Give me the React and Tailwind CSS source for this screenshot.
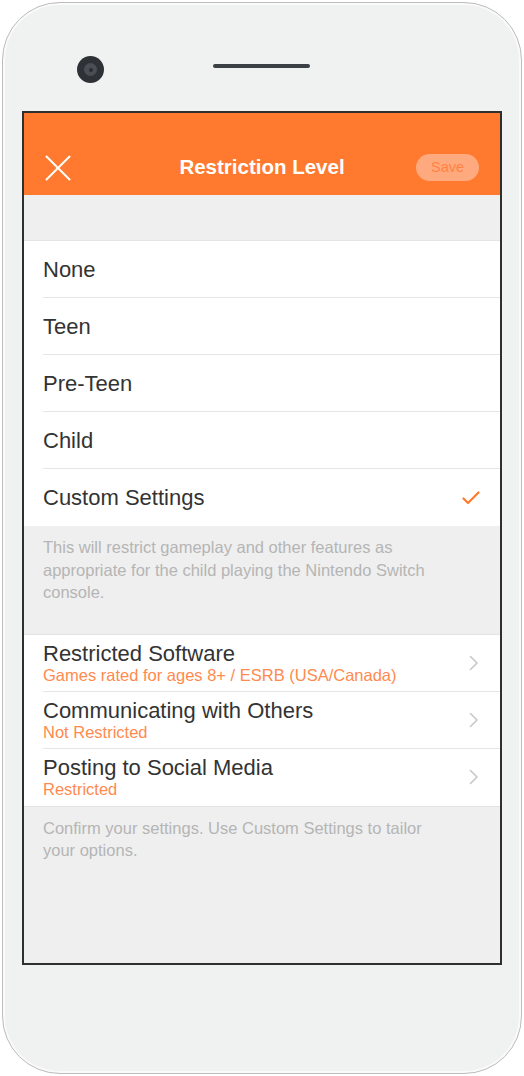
import React from 'react'

const levels = ['None', 'Teen', 'Pre-Teen', 'Child', 'Custom Settings']

const settings = [
  { title: 'Restricted Software', value: 'Games rated for ages 8+ / ESRB (USA/Canada)' },
  { title: 'Communicating with Others', value: 'Not Restricted' },
  { title: 'Posting to Social Media', value: 'Restricted' },
]

const Chevron = () => (
  <svg width="10" height="16" viewBox="0 0 10 16" fill="none" className="shrink-0">
    <polyline points="1.5,1.5 8,8 1.5,14.5" stroke="#c7c7cc" strokeWidth="1.6" strokeLinecap="round" strokeLinejoin="round" />
  </svg>
)

const App = () => {
  return (
    <div className="w-[524px] h-[1076px] p-[2px] bg-white" style={{ fontFamily: '"Liberation Sans", Arial, sans-serif' }}>
      <div className="h-full rounded-[58px] border border-[#bdbdbd] bg-[#f0f1f1] flex flex-col items-center shadow-[inset_0_0_0_2px_#fafafa]">

        {/* Camera + speaker */}
        <div className="w-full h-[108px] flex items-start">
          <div className="ml-[74px] mt-[53px] w-[27px] h-[27px] rounded-full bg-[#2e3236] flex items-center justify-center">
            <div className="w-[13px] h-[13px] rounded-full bg-[#4a4f55] flex items-center justify-center">
              <div className="w-[4px] h-[4px] rounded-full bg-[#2a2d31]" />
            </div>
          </div>
          <div className="ml-[109px] mt-[61px] w-[97px] h-[4px] rounded-full bg-[#3b4045]" />
        </div>

        {/* Screen */}
        <div className="w-[480px] h-[854px] border-2 border-[#2f2f2f] bg-[#efefef] flex flex-col overflow-hidden">

          {/* Header */}
          <div className="h-[82px] bg-[#ff7a2f] pt-[27px] shrink-0">
            <div className="h-[55px] px-[21px] flex items-center justify-between relative">
              <svg width="26" height="26" viewBox="0 0 26 26" fill="none">
                <line x1="1.5" y1="1.5" x2="24.5" y2="24.5" stroke="white" strokeWidth="2" strokeLinecap="round" />
                <line x1="24.5" y1="1.5" x2="1.5" y2="24.5" stroke="white" strokeWidth="2" strokeLinecap="round" />
              </svg>
              <span className="absolute left-0 right-0 text-center text-white font-bold text-[20.5px] pointer-events-none">
                Restriction Level
              </span>
              <div className="w-[63px] h-[27px] rounded-full bg-[#ffaa7e] flex items-center justify-center text-[14.5px] text-[#ff8244]">
                Save
              </div>
            </div>
          </div>

          <div className="h-[45px] shrink-0" />

          {/* Level list */}
          <div className="bg-white border-t border-[#e4e4e4]">
            {levels.map((level, i) => (
              <div key={level} className="pl-[19px]">
                <div className={`h-[57px] pr-[20px] flex items-center justify-between ${i < levels.length - 1 ? 'border-b border-[#e6e6e6]' : ''}`}>
                  <span className="text-[22px] text-[#333333]">{level}</span>
                  {level === 'Custom Settings' && (
                    <svg width="18" height="14" viewBox="0 0 18 14" fill="none">
                      <polyline points="1.5,7.5 6,12 16.5,1.5" stroke="#ff7a2f" strokeWidth="2.2" strokeLinecap="round" strokeLinejoin="round" />
                    </svg>
                  )}
                </div>
              </div>
            ))}
          </div>

          <p className="pl-[19px] pr-[50px] pt-[10px] pb-[30px] text-[16.5px] leading-[22.5px] text-[#b5b5b5]">
            This will restrict gameplay and other features as appropriate for the child playing the Nintendo Switch console.
          </p>

          {/* Settings list */}
          <div className="bg-white border-t border-[#e4e4e4] border-b">
            {settings.map((s, i) => (
              <div key={s.title} className="pl-[19px]">
                <div className={`h-[57px] pr-[21px] flex items-center justify-between ${i < settings.length - 1 ? 'border-b border-[#e6e6e6]' : ''}`}>
                  <div className="min-w-0">
                    <div className="text-[22px] leading-[25px] text-[#333333]">{s.title}</div>
                    <div className="text-[16.5px] leading-[19px] text-[#ff8a4f]">{s.value}</div>
                  </div>
                  <Chevron />
                </div>
              </div>
            ))}
          </div>

          <p className="pl-[19px] pr-[50px] pt-[10px] text-[16.5px] leading-[22px] text-[#b5b5b5]">
            Confirm your settings. Use Custom Settings to tailor your options.
          </p>
        </div>
      </div>
    </div>
  )
}

export default App
